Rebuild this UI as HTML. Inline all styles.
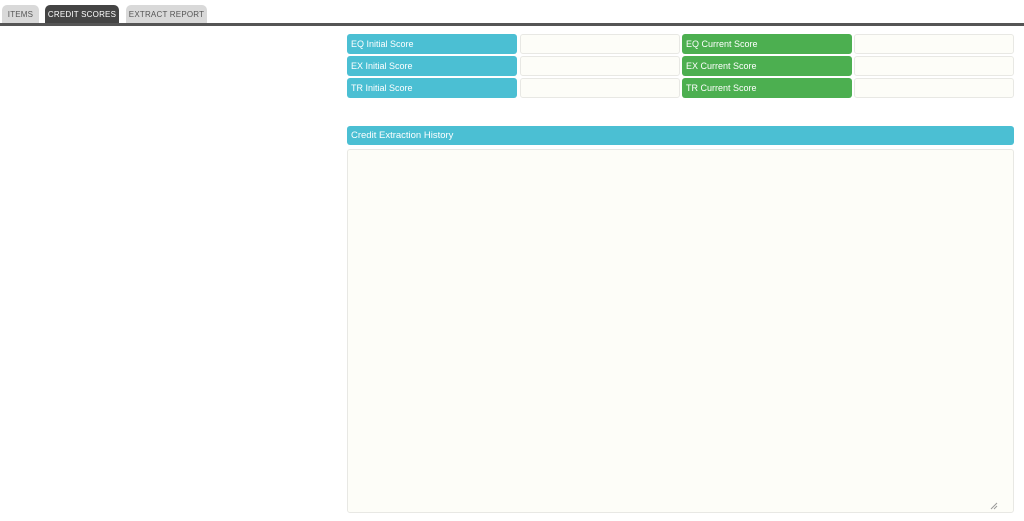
<!DOCTYPE html>
<html><head><style>
body{margin:0;width:1024px;height:521px;background:#fff;font-family:"Liberation Sans",sans-serif;position:relative;overflow:hidden}
.tab{position:absolute;top:5px;height:18px;border-radius:5px 5px 0 0;background:#d9d9d9;color:#555;font-size:8px;line-height:19px;text-align:center;letter-spacing:.2px}
.line{position:absolute;left:0;top:23px;width:1024px;height:3px;background:#555}
.lab{position:absolute;height:20px;border-radius:3px;color:#fff;font-size:9px;line-height:20px;padding-left:4px;box-sizing:border-box}
.b{background:#4bbfd3}.g{background:#4caf50}
.inp{position:absolute;height:20px;border:1px solid #e8e8e4;border-radius:3px;background:#fdfdf8;box-sizing:border-box}
</style></head><body>
<div class="tab" style="left:2px;width:37px">ITEMS</div>
<div class="tab" style="left:45px;width:74px;background:#444;color:#fff">CREDIT SCORES</div>
<div class="tab" style="left:126px;width:81px">EXTRACT REPORT</div>
<div class="line"></div>

<div class="lab b" style="left:347px;top:34px;width:170px">EQ Initial Score</div>
<div class="inp" style="left:520px;top:34px;width:160px"></div>
<div class="lab g" style="left:682px;top:34px;width:170px">EQ Current Score</div>
<div class="inp" style="left:854px;top:34px;width:160px"></div>

<div class="lab b" style="left:347px;top:56px;width:170px">EX Initial Score</div>
<div class="inp" style="left:520px;top:56px;width:160px"></div>
<div class="lab g" style="left:682px;top:56px;width:170px">EX Current Score</div>
<div class="inp" style="left:854px;top:56px;width:160px"></div>

<div class="lab b" style="left:347px;top:78px;width:170px">TR Initial Score</div>
<div class="inp" style="left:520px;top:78px;width:160px"></div>
<div class="lab g" style="left:682px;top:78px;width:170px">TR Current Score</div>
<div class="inp" style="left:854px;top:78px;width:160px"></div>

<div class="lab b" style="left:347px;top:126px;width:667px;height:19px;line-height:19px;font-size:9.5px">Credit Extraction History</div>
<div class="inp" style="left:347px;top:149px;width:667px;height:364px"></div>
<svg style="position:absolute;left:990px;top:502px" width="8" height="8"><path d="M1 7L7 1M4 7L7 4" stroke="#999" stroke-width="1"/></svg>
</body></html>
